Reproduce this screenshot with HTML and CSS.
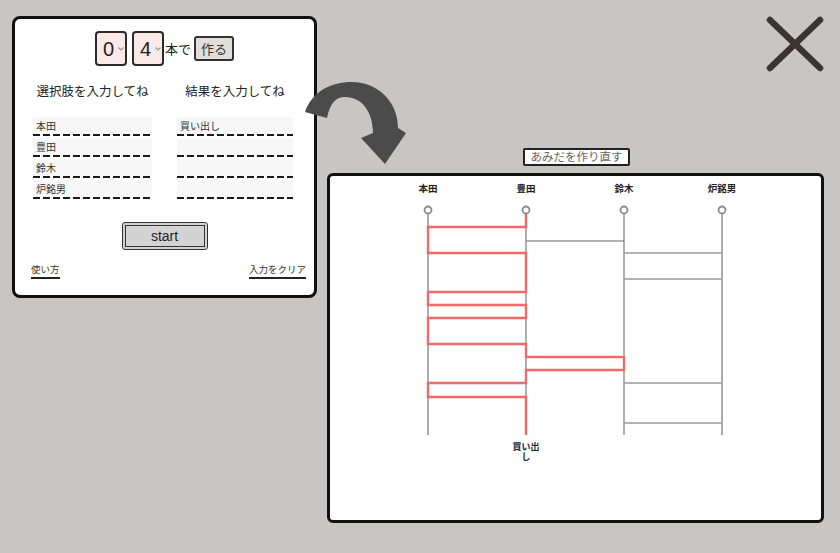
FILE: index.html
```html
<!DOCTYPE html>
<html lang="ja">
<head>
<meta charset="utf-8">
<title>あみだくじ</title>
<link rel="stylesheet" href="styles.css">
</head>
<body>
<div class="page">
  <section class="setup">
    <div class="count">
      <div class="sel"><span class="num">0</span><svg class="chev" viewBox="0 0 6 4"><path d="M0.5 0.5 L3 3 L5.5 0.5"/></svg></div>
      <div class="sel"><span class="num">4</span><svg class="chev" viewBox="0 0 6 4"><path d="M0.5 0.5 L3 3 L5.5 0.5"/></svg></div>
      <span class="unit">本で</span>
      <button class="make">作る</button>
    </div>
    <div class="fields">
      <div class="col">
        <div class="label">選択肢を入力してね</div>
        <input class="field" type="text" value="本田">
        <input class="field" type="text" value="豊田">
        <input class="field" type="text" value="鈴木">
        <input class="field" type="text" value="炉銘男">
      </div>
      <div class="col">
        <div class="label">結果を入力してね</div>
        <input class="field" type="text" value="買い出し">
        <input class="field" type="text" value="">
        <input class="field" type="text" value="">
        <input class="field" type="text" value="">
      </div>
    </div>
    <button class="start">start</button>
    <div class="links">
      <span class="link">使い方</span>
      <span class="link">入力をクリア</span>
    </div>
  </section>

  <section class="result">
    <button class="redo">あみだを作り直す</button>
    <div class="board">
      <svg class="ladder" width="491" height="266" viewBox="0 0 491 266">
        <g class="names">
          <text x="98" y="16">本田</text>
          <text x="196" y="16">豊田</text>
          <text x="294" y="16">鈴木</text>
          <text x="392" y="16">炉銘男</text>
        </g>
        <g class="rails">
          <line x1="98" y1="38" x2="98" y2="259"/>
          <line x1="196" y1="38" x2="196" y2="259"/>
          <line x1="294" y1="38" x2="294" y2="259"/>
          <line x1="392" y1="38" x2="392" y2="259"/>
        </g>
        <g class="rungs">
          <line x1="98" y1="51" x2="196" y2="51"/>
          <line x1="98" y1="77" x2="196" y2="77"/>
          <line class="dark" x1="196" y1="65" x2="294" y2="65"/>
          <line x1="294" y1="77" x2="392" y2="77"/>
          <line x1="294" y1="103" x2="392" y2="103"/>
          <line x1="98" y1="116" x2="196" y2="116"/>
          <line x1="98" y1="129" x2="196" y2="129"/>
          <line x1="98" y1="142" x2="196" y2="142"/>
          <line x1="98" y1="168" x2="196" y2="168"/>
          <line x1="196" y1="181" x2="294" y2="181"/>
          <line x1="196" y1="194" x2="294" y2="194"/>
          <line x1="98" y1="207" x2="196" y2="207"/>
          <line x1="98" y1="221" x2="196" y2="221"/>
          <line x1="294" y1="207" x2="392" y2="207"/>
          <line x1="294" y1="247" x2="392" y2="247"/>
        </g>
        <polyline class="route" points="196,38 196,51 98,51 98,77 196,77 196,116 98,116 98,129 196,129 196,142 98,142 98,168 196,168 196,181 294,181 294,194 196,194 196,207 98,207 98,221 196,221 196,259"/>
        <g class="pins">
          <circle cx="98" cy="34" r="3.5"/>
          <circle cx="196" cy="34" r="3.5"/>
          <circle cx="294" cy="34" r="3.5"/>
          <circle cx="392" cy="34" r="3.5"/>
        </g>
      </svg>
      <div class="goal">買い出し</div>
    </div>
  </section>
</div>

<svg class="arrow" width="120" height="92" viewBox="295 78 120 92">
  <path d="M305 112 C312 92 330 82 352 82 C378 82 398 102 398 128 L406 133 L385 164 L361 138 L373 133 C373 112 362 97 345 97 C335 97 330 104 327 118 Z"/>
</svg>

<svg class="close" width="62" height="62" viewBox="0 0 62 62">
  <line x1="6" y1="6" x2="56" y2="54"/>
  <line x1="56" y1="6" x2="6" y2="54"/>
</svg>
</body>
</html>
```

FILE: styles.css
```css
html, body {
  margin: 0;
  padding: 0;
}
body {
  width: 840px;
  height: 553px;
  overflow: hidden;
  background: #c8c6c2;
  font-family: "Liberation Sans", "Noto Sans CJK JP", sans-serif;
  color: #222;
  position: relative;
}
.page {
  display: flex;
  align-items: flex-start;
  padding: 16px 0 0 12px;
}

/* left setup panel */
.setup {
  width: 305px;
  height: 282px;
  box-sizing: border-box;
  border: 3px solid #111;
  border-radius: 8px;
  background: #fff;
  display: flex;
  flex-direction: column;
}
.count {
  margin-top: 12px;
  height: 35px;
  display: flex;
  justify-content: center;
  align-items: center;
}
.sel {
  width: 32px;
  height: 35px;
  box-sizing: border-box;
  border: 2px solid #2a2a2a;
  border-radius: 4px;
  background: #fbe8e8;
  display: flex;
  align-items: center;
  padding-left: 6px;
  margin-right: 5px;
}
.sel + .sel {
  margin-right: 1px;
}
.num {
  font-size: 20px;
  line-height: 1;
  color: #222;
  width: 13px;
}
.chev {
  width: 6px;
  height: 4px;
  margin-left: 2px;
  fill: none;
  stroke: #999;
  stroke-width: 1.2;
}
.unit {
  font-size: 13px;
  margin-right: 3px;
  color: #222;
}
.make {
  width: 40px;
  height: 25px;
  box-sizing: border-box;
  border: 2px solid #333;
  border-radius: 3px;
  background: #e2dfdb;
  font-family: "Noto Sans CJK JP", sans-serif;
  font-size: 13px;
  color: #333;
  padding: 0;
  line-height: 1;
}
.fields {
  display: grid;
  grid-template-columns: 119px 116px;
  column-gap: 25px;
  margin: 16px 0 0 18px;
}
.col {
  display: flex;
  flex-direction: column;
}
.label {
  font-family: "Noto Sans CJK JP", sans-serif;
  font-size: 12.5px;
  line-height: 18px;
  text-align: center;
  color: #222;
  margin-bottom: 17px;
  white-space: nowrap;
}
.field {
  display: block;
  width: 100%;
  height: 19px;
  box-sizing: border-box;
  margin: 0 0 2px 0;
  padding: 0 3px 2px;
  border: none;
  outline: none;
  font-family: "Noto Sans CJK JP", sans-serif;
  font-size: 10px;
  color: #333;
  background: repeating-linear-gradient(90deg, #1a1a1a 0 7px, transparent 7px 10px) left bottom / 100% 2px no-repeat, #f7f7f7;
}
.start {
  align-self: center;
  margin-top: 21px;
  width: 86px;
  height: 28px;
  box-sizing: border-box;
  border: 4px double #333;
  border-radius: 3px;
  background: #d3d3d3;
  font-family: "Liberation Sans", sans-serif;
  font-size: 14px;
  color: #222;
  padding: 0;
}
.links {
  display: flex;
  justify-content: space-between;
  margin-top: 12px;
  padding: 0 8px 0 16px;
}
.link {
  font-family: "Noto Sans CJK JP", sans-serif;
  font-size: 9.5px;
  line-height: 14px;
  color: #333;
  padding-bottom: 1px;
  border-bottom: 2px solid #222;
}

/* right result area */
.result {
  margin: 132px 0 0 10px;
  width: 497px;
  display: flex;
  flex-direction: column;
  align-items: center;
}
.redo {
  width: 107px;
  height: 18px;
  box-sizing: border-box;
  border: 2px solid #222;
  border-radius: 2px;
  background: #fff;
  font-family: "Noto Sans CJK JP", sans-serif;
  font-size: 11.5px;
  line-height: 1;
  color: #666;
  padding: 0;
  margin-left: 2px;
  white-space: nowrap;
}
.board {
  margin-top: 7px;
  width: 497px;
  height: 350px;
  box-sizing: border-box;
  border: 3px solid #111;
  border-radius: 6px;
  background: #fff;
}
.ladder {
  display: block;
}
.names text {
  font-family: "Noto Sans CJK JP", sans-serif;
  font-size: 9.5px;
  font-weight: 700;
  fill: #222;
  text-anchor: middle;
}
.goal {
  width: 30px;
  margin-left: 181px;
  font-family: "Noto Sans CJK JP", sans-serif;
  font-size: 9px;
  font-weight: 700;
  line-height: 10px;
  text-align: center;
  color: #222;
}
.rails line,
.rungs line {
  stroke: #9a9a9a;
  stroke-width: 1.6;
}
.rungs line.dark {
  stroke: #666;
  stroke-width: 1.1;
}
.route {
  fill: none;
  stroke: #f06a6a;
  stroke-width: 2.4;
  stroke-linejoin: miter;
}
.pins circle {
  fill: #fff;
  stroke: #8a8a8a;
  stroke-width: 1.8;
}

/* overlays */
.arrow {
  position: absolute;
  left: 295px;
  top: 78px;
  fill: #4b4b4b;
}
.close {
  position: absolute;
  left: 764px;
  top: 14px;
  stroke: #3b3431;
  stroke-width: 6.5;
  stroke-linecap: round;
}
```
